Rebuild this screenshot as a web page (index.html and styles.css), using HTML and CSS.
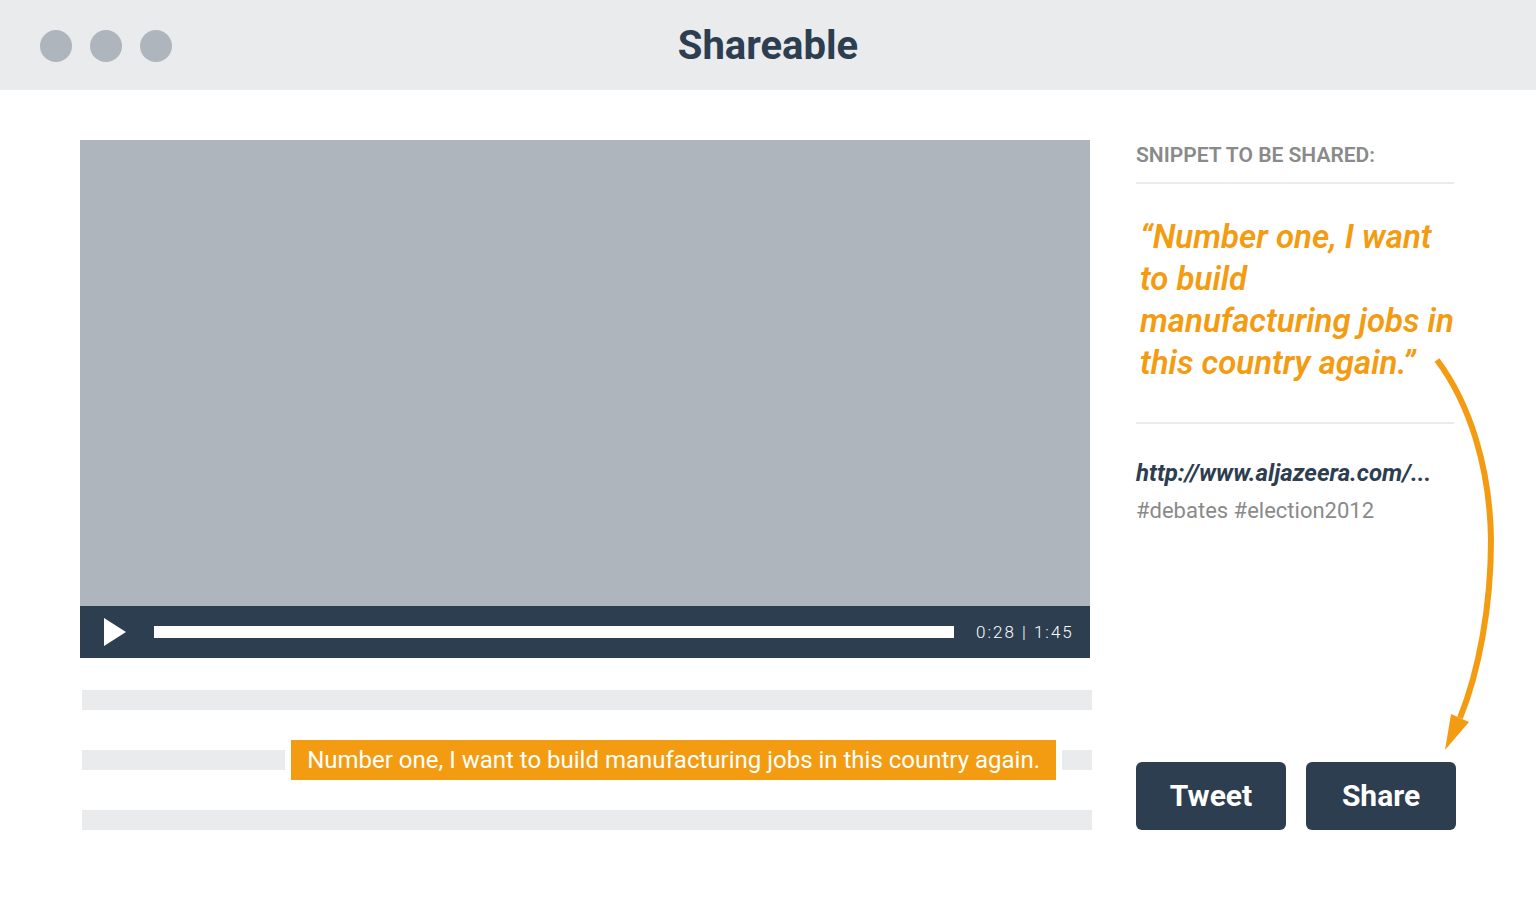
FILE: index.html
```html
<!DOCTYPE html>
<html lang="en">
<head>
<meta charset="utf-8">
<meta name="viewport" content="width=device-width, initial-scale=1">
<title>Shareable</title>
<link rel="stylesheet" href="styles.css">
</head>
<body>
<header class="titlebar">
  <div class="dots"><span class="dot"></span><span class="dot"></span><span class="dot"></span></div>
  <h1 class="title">Shareable</h1>
</header>
<main class="content">
  <section class="media">
    <div class="player">
      <div class="screen"></div>
      <div class="controls">
        <button class="play" type="button" aria-label="Play">
          <svg class="play-icon" viewBox="0 0 22 28" aria-hidden="true"><path d="M0 0L22 14L0 28Z"/></svg>
        </button>
        <div class="track"></div>
        <span class="time">0:28 | 1:45</span>
      </div>
    </div>
    <div class="transcript">
      <div class="line"></div>
      <div class="row">
        <div class="line line-fill"></div>
        <p class="highlight">Number one, I want to build manufacturing jobs in this country again.</p>
        <div class="line line-end"></div>
      </div>
      <div class="line"></div>
    </div>
  </section>
  <aside class="share">
    <h2 class="label">SNIPPET TO BE SHARED:</h2>
    <blockquote class="quote">“Number one, I want<br>to build<br>manufacturing jobs in<br>this country again.”</blockquote>
    <a class="link" href="#">http://www.aljazeera.com/...</a>
    <p class="tags">#debates #election2012</p>
    <div class="actions">
      <button class="action" type="button">Tweet</button>
      <button class="action" type="button">Share</button>
    </div>
    <svg class="arrow" viewBox="0 0 64 396" aria-hidden="true">
      <path class="arrow-line" d="M3 6C36 50 56 114 57 186C57 252 45 317 26 364"/>
      <path class="arrow-head" d="M17 360L35 368L11 396Z"/>
    </svg>
  </aside>
</main>
</body>
</html>
```

FILE: styles.css
```css
* { box-sizing: border-box; }

body {
  margin: 0;
  background: #fff;
  color: #2d3e50;
  font-family: Roboto, "Liberation Sans", sans-serif;
}

h1, h2, p, blockquote { margin: 0; }

button {
  border: 0;
  padding: 0;
  font-family: inherit;
  cursor: pointer;
}

.titlebar {
  display: grid;
  grid-template-columns: 1fr auto 1fr;
  align-items: center;
  min-height: 90px;
  padding: 2px 40px 0;
  background: #e9ebec;
}

.dots { display: flex; gap: 18px; }

.dot {
  width: 32px;
  height: 32px;
  border-radius: 50%;
  background: #aeb5bc;
}

.title {
  font-size: 40px;
  line-height: 48px;
  font-weight: 700;
}

.content {
  display: grid;
  grid-template-columns: minmax(0, 1fr) 320px;
  gap: 46px;
  padding: 50px 80px 70px;
}

.screen {
  aspect-ratio: 1010 / 466;
  background: #aeb5bc;
}

.controls {
  display: flex;
  align-items: center;
  height: 52px;
  padding: 0 14px 0 24px;
  background: #2d3e50;
}

.play {
  display: flex;
  margin-right: 28px;
  background: none;
}

.play-icon { width: 22px; height: 28px; fill: #fff; }

.track {
  flex: 1;
  height: 12px;
  margin-right: 22px;
  background: #fff;
}

.time {
  min-width: 100px;
  color: #fff;
  font-size: 17px;
  line-height: 20px;
  font-weight: 300;
  letter-spacing: 2px;
  white-space: nowrap;
}

.transcript {
  display: flex;
  flex-direction: column;
  gap: 30px;
  margin: 32px -2px 0 2px;
}

.line { height: 20px; background: #e9ebec; }

.row { display: flex; align-items: center; gap: 6px; }

.line-fill { flex: 1; }

.line-end { width: 30px; }

.highlight {
  padding: 0 16px;
  background: #f39c12;
  color: #fff;
  font-size: 24px;
  line-height: 40px;
}

.share {
  position: relative;
  display: flex;
  flex-direction: column;
}

.label {
  margin-right: 2px;
  padding-bottom: 12px;
  border-bottom: 2px solid #e9ebec;
  color: #8a8a8a;
  font-size: 21px;
  line-height: 30px;
  font-weight: 600;
}

.quote {
  margin-right: 2px;
  padding: 32px 0 38px 4px;
  border-bottom: 2px solid #e9ebec;
  color: #f39c12;
  font-size: 33px;
  line-height: 42px;
  font-style: italic;
  font-weight: 600;
  white-space: nowrap;
}

.link {
  margin-top: 30px;
  color: #2d3e50;
  font-size: 24px;
  line-height: 38px;
  font-style: italic;
  font-weight: 700;
  text-decoration: none;
}

.tags {
  color: #8a8a8a;
  font-size: 22px;
  line-height: 38px;
}

.actions {
  display: grid;
  grid-template-columns: 1fr 1fr;
  gap: 20px;
  margin-top: auto;
}

.action {
  height: 68px;
  border-radius: 6px;
  background: #2d3e50;
  color: #fff;
  font-size: 30px;
  line-height: 36px;
  font-weight: 700;
}

.arrow {
  position: absolute;
  top: 214px;
  right: -42px;
  width: 64px;
  height: 396px;
  pointer-events: none;
}

.arrow-line { fill: none; stroke: #f39c12; stroke-width: 6; }

.arrow-head { fill: #f39c12; }
```
